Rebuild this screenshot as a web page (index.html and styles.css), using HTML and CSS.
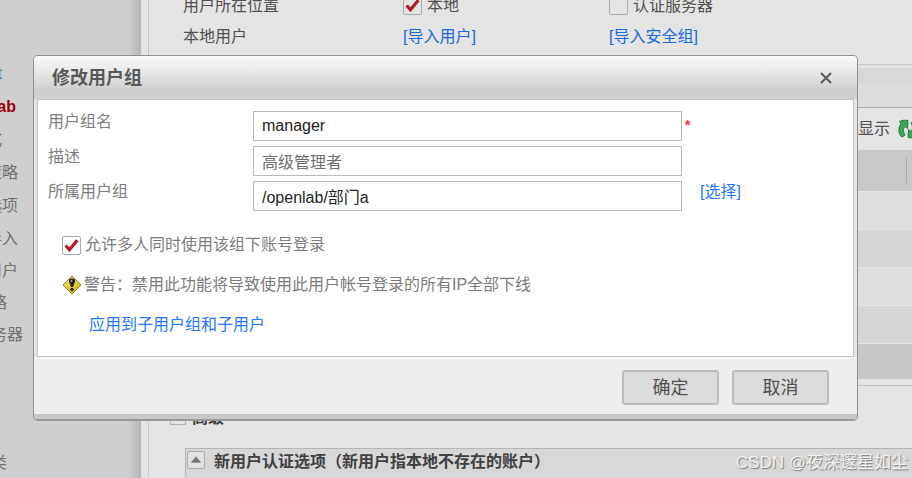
FILE: index.html
```html
<!DOCTYPE html>
<html lang="zh-CN">
<head>
<meta charset="utf-8">
<meta name="viewport" content="width=device-width, initial-scale=1">
<title>修改用户组</title>
<link rel="stylesheet" href="styles.css">
</head>
<body>
<div class="page">
  <nav class="sidebar">
    <ul class="nav nav-main">
      <li class="blue"><a href="#">t</a></li>
      <li class="current"><a href="#">lab</a></li>
      <li class="blue"><a href="#">式</a></li>
      <li><a href="#">策略</a></li>
      <li><a href="#">选项</a></li>
      <li><a href="#">导入</a></li>
    </ul>
    <ul class="nav nav-more">
      <li><a href="#">用户</a></li>
      <li class="short"><a href="#">略</a></li>
      <li class="wide"><a href="#">务器</a></li>
    </ul>
    <ul class="nav nav-last">
      <li class="short"><a href="#">类</a></li>
    </ul>
  </nav>
  <main class="content">
    <div class="settings">
      <span>用户所在位置</span>
      <span class="choice">
        <span class="tick"><input type="checkbox" id="local" checked><svg viewBox="0 0 18 18"><path d="M3.5 9 7 13 14.5 4"/></svg></span>
        <label for="local">本地</label>
      </span>
      <span class="choice">
        <span class="tick"><input type="checkbox" id="remote"></span>
        <label for="remote">认证服务器</label>
      </span>
      <span>本地用户</span>
      <a href="#">[导入用户]</a>
      <a href="#">[导入安全组]</a>
    </div>
    <section class="grid-panel">
      <div class="grid-title"></div>
      <div class="grid-tabs"></div>
      <div class="toolbar">
        <span>显示</span>
        <svg class="refresh" viewBox="0 0 20 20"><path d="M4 18C0 15 0 8 3 5L1.500 2.500C4 1 7 1 10 1.500L9.500 9.500 7 7.500C5 10 5 13 7 16Z"/><path d="M16 2C20 5 20 12 17 15L18.500 17.500C16 19 13 19 10 18.500L10.500 10.500 13 12.500C15 10 15 7 13 4Z"/></svg>
      </div>
      <div class="grid-head"><i></i></div>
      <div class="grid-row"></div>
      <div class="grid-row alt"></div>
      <div class="grid-row"></div>
      <div class="grid-row alt"></div>
      <div class="grid-foot"></div>
    </section>
    <h2 class="advanced"><span class="fold"></span>高级</h2>
    <section class="options">
      <button class="collapse" type="button" aria-label="收起"><svg viewBox="0 0 18 18"><path d="M3 12 9 5 15 12Z"/></svg></button>
      <h3>新用户认证选项（新用户指本地不存在的账户）</h3>
    </section>
  </main>
</div>

<form class="dialog" role="dialog" aria-labelledby="dialog-title">
  <header class="dialog-header">
    <h1 id="dialog-title">修改用户组</h1>
    <button class="close" type="button" aria-label="关闭"><svg viewBox="0 0 12 12"><path d="M1 1 11 11M11 1 1 11"/></svg></button>
  </header>
  <div class="dialog-body">
    <div class="field">
      <label for="name">用户组名</label>
      <input type="text" id="name" value="manager">
      <span class="required">*</span>
    </div>
    <div class="field">
      <label for="desc">描述</label>
      <input class="muted" type="text" id="desc" value="高级管理者">
    </div>
    <div class="field">
      <label for="parent">所属用户组</label>
      <input type="text" id="parent" value="/openlab/部门a">
      <a class="pick" href="#">[选择]</a>
    </div>
    <div class="extras">
      <div class="line">
        <span class="tick"><input type="checkbox" id="multi" checked><svg viewBox="0 0 18 18"><path d="M3.5 9 7 13 14.5 4"/></svg></span>
        <label for="multi">允许多人同时使用该组下账号登录</label>
      </div>
      <div class="line warning">
        <svg class="warn" viewBox="0 0 20 20">
          <defs><linearGradient id="gold" x1="0" y1="0" x2="1" y2="1"><stop offset="0" stop-color="#fff36b"/><stop offset="1" stop-color="#c7a900"/></linearGradient></defs>
          <path d="M10 1 19 10 10 19 1 10Z" fill="url(#gold)" stroke="#8c8020" stroke-linejoin="round"/>
          <path d="M10 3.500C13.500 3.500 13.500 6 12.500 8L11 12H9L7.500 8C6.500 6 6.500 3.500 10 3.500Z" fill="#222"/>
          <circle cx="10" cy="14.500" r="1.700" fill="#222"/>
          <circle cx="9.500" cy="6" r="1" fill="#aaa"/>
        </svg>
        <span>警告：禁用此功能将导致使用此用户帐号登录的所有IP全部下线</span>
      </div>
      <div class="line"><a class="apply" href="#">应用到子用户组和子用户</a></div>
    </div>
  </div>
  <footer class="dialog-footer">
    <button type="submit">确定</button>
    <button type="button">取消</button>
  </footer>
</form>
<div class="watermark">CSDN @夜深邃星如尘</div>
</body>
</html>
```

FILE: styles.css
```css
* { box-sizing: border-box; }

body {
  margin: 0;
  min-height: 100vh;
  overflow: hidden;
  background: #e4e4e4;
  color: #505050;
  font: 16px/22px "Liberation Sans", "Noto Sans CJK SC", sans-serif;
}

a { color: #1f78ff; text-decoration: none; }
h1, h2, h3, ul { margin: 0; padding: 0; }
ul { list-style: none; }
input, button { font: inherit; color: inherit; }
svg { display: block; }

.page { display: flex; height: 100vh; overflow: hidden; }

/* Sidebar: the labels run out past the left edge */
.sidebar {
  flex: 0 0 141px;
  padding-top: 57px;
  overflow: hidden;
  background: linear-gradient(to right, #cfcfcf 128px, #b4b4b4 141px);
}
.nav li { display: flex; justify-content: flex-end; align-items: center; width: 18px; height: 32px; white-space: nowrap; }
.nav-main li { height: 33px; }
.nav a { color: #707070; }
.nav .blue { width: 2px; }
.nav .blue a { color: #47769b; }
.nav .current { width: 16px; }
.nav .current a { color: #a00010; font-weight: bold; }
.nav .short { width: 7px; }
.nav .wide { width: 23px; }
.nav-last { padding-top: 96px; }

.content {
  flex: 1;
  min-width: 0;
  margin-left: 7px;
  border-left: 1px solid #c6c6c6;
}
.settings {
  display: grid;
  grid-template-columns: 220px 206px 1fr;
  grid-auto-rows: 31px;
  align-items: center;
  margin-top: -10px;
  padding-left: 34px;
  height: 74px;
}
.settings a { color: #1769e0; }
.choice { display: flex; align-items: center; gap: 5px; }

.tick { position: relative; flex: none; width: 19px; height: 19px; }
.tick input {
  display: block;
  width: 19px;
  height: 19px;
  margin: 0;
  appearance: none;
  border: 1px solid #aaa;
  border-radius: 2px;
  background: transparent;
}
.tick svg { position: absolute; inset: 0; pointer-events: none; fill: none; stroke: #ac1d25; stroke-width: 3; }

.grid-panel { border-top: 1px solid #c8c8c8; border-bottom: 1px solid #bebebe; }
.grid-title { height: 19px; border-top: 3px solid #e2e2e2; background: #d7d7d7; }
.grid-tabs { height: 24px; border-bottom: 1px solid #b0b0b0; background: #dcdcdc; }
.toolbar { display: flex; justify-content: flex-end; align-items: center; gap: 8px; height: 42px; margin-right: -6px; }
.refresh { width: 20px; height: 20px; fill: #39a85a; stroke: #247b3d; stroke-width: 1; }
.grid-head { display: flex; justify-content: flex-end; align-items: center; height: 41px; padding-right: 5px; background: #c9c9c9; }
.grid-head i { width: 1px; height: 25px; background: #aaa; }
.grid-row { height: 38px; border-top: 1px solid #e6e6e6; background: #dedede; }
.grid-row.alt { background: #d6d6d6; }
.grid-foot { height: 42px; border-top: 1px solid #e6e6e6; border-bottom: 6px solid #e4e4e4; background: #c8c8c8; }

.advanced { display: flex; align-items: center; gap: 6px; height: 62px; padding: 2px 0 0 21px; font-size: 16px; color: #3c3c3c; }
.fold { width: 16px; height: 14px; border: 1px solid #b4b4b4; }
.options {
  display: flex;
  align-items: flex-start;
  gap: 9px;
  height: 60px;
  margin-left: 36px;
  padding: 2px 0 0 1px;
  border: solid #b4b4b4;
  border-width: 1px 0 0 1px;
  background: #d7d7d7;
}
.options h3 { font-size: 16px; color: #404040; }
.collapse { width: 18px; height: 18px; padding: 0; border: 1px solid #aaa; border-radius: 2px; background: #e2e2e2; fill: #777; }

/* Dialog over the page */
.dialog {
  position: absolute;
  top: 55px;
  left: 33px;
  right: 54px;
  border: 1px solid #8f8f8f;
  border-bottom: 2px solid #999;
  border-radius: 5px;
  overflow: hidden;
  background: #e6e6e6;
}
.dialog-header {
  display: flex;
  align-items: center;
  justify-content: space-between;
  height: 43px;
  padding: 0 25px 0 18px;
  background: linear-gradient(#fafafa, #e6e6e6 40%, #cfcfcf 80%, #cecece);
}
.dialog-header h1 { font-size: 18px; color: #585858; }
.close { width: 12px; height: 12px; padding: 0; border: 0; background: none; }
.close svg { fill: none; stroke: #5a5a5a; stroke-width: 2; }

.dialog-body {
  margin: 0 3px;
  padding: 11px 0 11px 10px;
  border: 1px solid #c4c4c4;
  background: #fff;
  color: #7c7c7c;
}
.field { display: grid; grid-template-columns: 205px minmax(0, 1fr) 171px; align-items: start; height: 35px; }
.field input {
  width: 100%;
  height: 30px;
  padding: 0 8px;
  border: 1px solid #b9b9bd;
  border-radius: 0;
  background: #fff;
  color: #222;
}
.field .muted { color: #707070; }
.required { padding: 3px 0 0 3px; color: #ff2b2b; font-size: 14px; font-weight: bold; }
.pick { padding-left: 18px; }
.extras { padding: 9px 0 0 14px; }
.line { display: flex; align-items: center; gap: 4px; height: 40px; }
.warning { gap: 2px; }
.warn { flex: none; width: 20px; height: 20px; }
.apply { padding-left: 27px; }

.dialog-footer {
  display: flex;
  justify-content: flex-end;
  gap: 13px;
  height: 62px;
  padding: 11px 28px 0 0;
  border-top: 2px solid #f5f5f5;
  border-bottom: 5px solid #c8c8c8;
  background: #eee;
}
.dialog-footer button {
  width: 97px;
  height: 35px;
  padding: 0;
  border: 2px solid #bdbdc1;
  border-radius: 3px;
  background: #dcdcdc;
  color: #505050;
  font-size: 18px;
}

.watermark {
  position: absolute;
  right: 4px;
  bottom: 4px;
  color: #f2f2f2;
  font-size: 17px;
  text-shadow: 1px 1px 1px #777;
}
```
